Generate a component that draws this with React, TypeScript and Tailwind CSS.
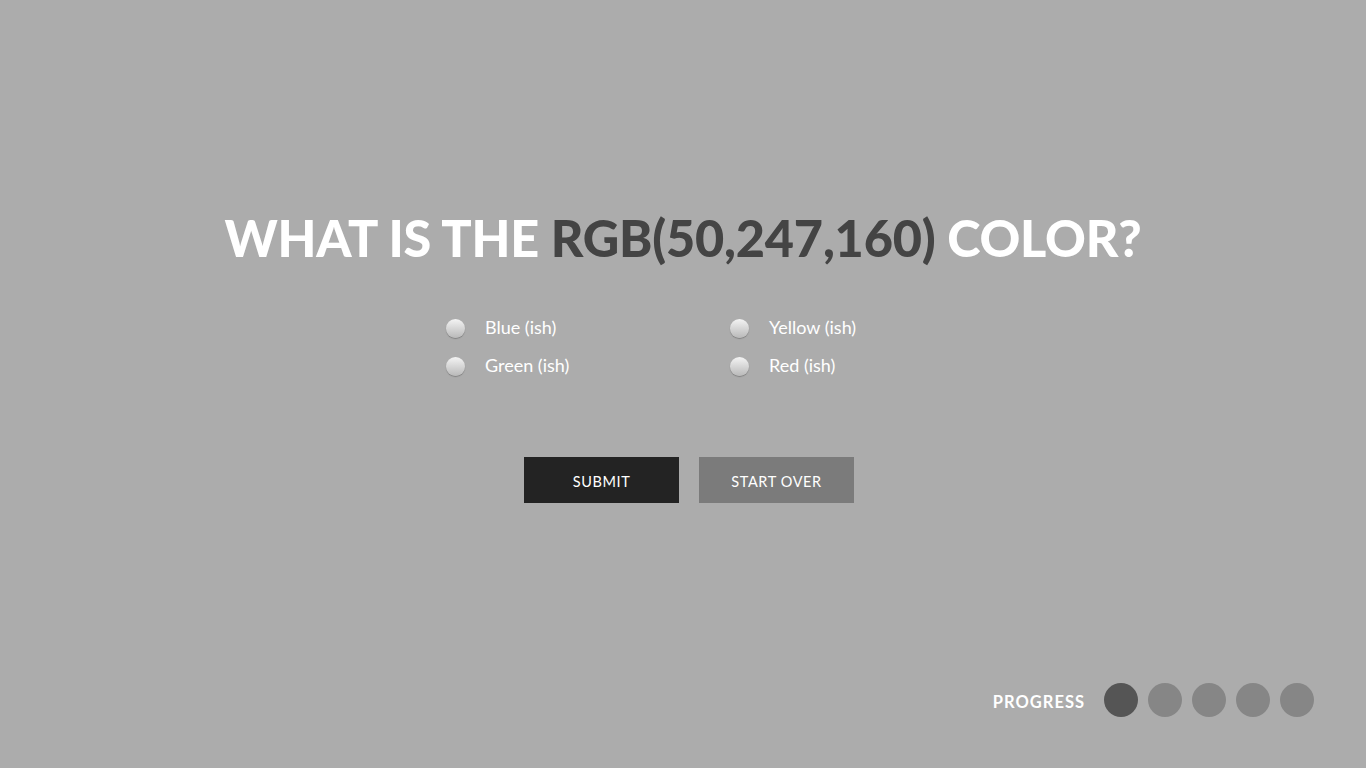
import React, { useState } from 'react';

const options = [
  ['Blue (ish)', 'Yellow (ish)'],
  ['Green (ish)', 'Red (ish)'],
];

function Radio({ label, checked, onClick }: { label: string; checked: boolean; onClick: () => void }) {
  return (
    <label onClick={onClick} className="flex items-center cursor-pointer h-[38px]">
      <span className="w-[19px] h-[19px] rounded-full bg-gradient-to-b from-[#f4f4f4] to-[#b9b9b9] shadow-[0_1px_1px_rgba(0,0,0,0.25)] flex items-center justify-center mt-[2px]">
        {checked && <span className="w-[7px] h-[7px] rounded-full bg-[#444]" />}
      </span>
      <span className="ml-[20px] text-[18px] text-white">{label}</span>
    </label>
  );
}

export default function App() {
  const [choice, setChoice] = useState<string | null>(null);

  return (
    <div className="w-full h-[768px] bg-[#acacac] flex flex-col font-['Lato','Noto_Sans',sans-serif] overflow-hidden">
      <div className="flex-1 flex flex-col items-center pt-[203px]">
        <h1 className="text-[50.4px] font-black text-white leading-[70px] tracking-[-0.2px]">
          WHAT IS THE <span className="text-[#444444]">RGB(50,247,160)</span> COLOR?
        </h1>

        <div className="mt-[35px] grid grid-cols-[284px_200px] w-[484px] ml-[10px]">
          {options.map((row) =>
            row.map((opt) => (
              <Radio key={opt} label={opt} checked={choice === opt} onClick={() => setChoice(opt)} />
            ))
          )}
        </div>

        <div className="mt-[73px] ml-[12px] flex gap-5">
          <button className="w-[155px] h-[46px] pt-[3px] bg-[#232323] text-white text-[14.5px] tracking-[0.6px] uppercase">
            Submit
          </button>
          <button
            onClick={() => setChoice(null)}
            className="w-[155px] h-[46px] pt-[3px] bg-[#7b7b7b] text-white text-[14.5px] tracking-[0.6px] uppercase"
          >
            Start Over
          </button>
        </div>
      </div>

      <div className="flex items-center justify-end pr-[52px] pb-[51px]">
        <span className="text-[16.5px] font-bold text-white tracking-[1px] mr-[19px] mt-[4px]">PROGRESS</span>
        <div className="flex gap-[10px]">
          <span className="w-[34px] h-[34px] rounded-full bg-[#555555]" />
          <span className="w-[34px] h-[34px] rounded-full bg-[#868686]" />
          <span className="w-[34px] h-[34px] rounded-full bg-[#868686]" />
          <span className="w-[34px] h-[34px] rounded-full bg-[#868686]" />
          <span className="w-[34px] h-[34px] rounded-full bg-[#868686]" />
        </div>
      </div>
    </div>
  );
}
